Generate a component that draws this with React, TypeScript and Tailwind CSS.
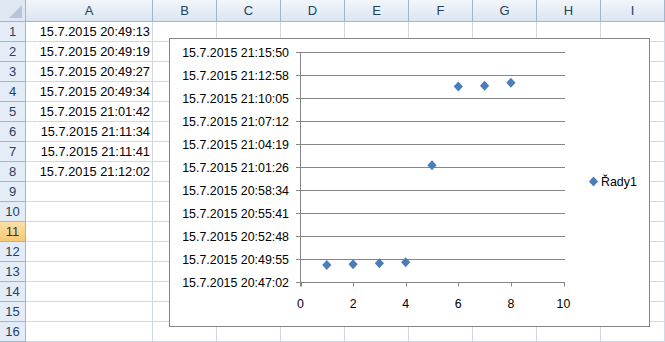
import React from "react";

const cols = ["A", "B", "C", "D", "E", "F", "G", "H", "I"];
const aValues = [
  "15.7.2015 20:49:13",
  "15.7.2015 20:49:19",
  "15.7.2015 20:49:27",
  "15.7.2015 20:49:34",
  "15.7.2015 21:01:42",
  "15.7.2015 21:11:34",
  "15.7.2015 21:11:41",
  "15.7.2015 21:12:02",
];
const yLabels = [
  "15.7.2015 21:15:50",
  "15.7.2015 21:12:58",
  "15.7.2015 21:10:05",
  "15.7.2015 21:07:12",
  "15.7.2015 21:04:19",
  "15.7.2015 21:01:26",
  "15.7.2015 20:58:34",
  "15.7.2015 20:55:41",
  "15.7.2015 20:52:48",
  "15.7.2015 20:49:55",
  "15.7.2015 20:47:02",
];
const secs = [131, 137, 145, 152, 880, 1472, 1479, 1500];

function Diamond({ cx, cy }: { cx: number; cy: number }) {
  return (
    <polygon
      points={`${cx},${cy - 5} ${cx + 4.6},${cy} ${cx},${cy + 5} ${cx - 4.6},${cy}`}
      fill="#4a7ebb"
    />
  );
}

function Chart() {
  const font = "'Liberation Sans', Arial, sans-serif";
  const x0 = 130.5;
  const unit = 26.3;
  const yBase = 243.5;
  const fs = 12.4;
  return (
    <div className="absolute left-[169px] top-[38px] w-[481px] h-[289px] border border-[#868686] bg-white">
      <svg width="479" height="287" className="block">
        {yLabels.map((_, i) => (
          <line key={"g" + i} x1={126} x2={395} y1={13.5 + 23 * i} y2={13.5 + 23 * i} stroke="#868686" strokeWidth={1} />
        ))}
        <line x1={x0} x2={x0} y1={13} y2={247.5} stroke="#868686" strokeWidth={1} />
        {[0, 2, 4, 6, 8, 10].map((v) => (
          <line key={"t" + v} x1={Math.round(x0 + unit * v) + 0.5} x2={Math.round(x0 + unit * v) + 0.5} y1={yBase} y2={yBase + 4} stroke="#868686" strokeWidth={1} />
        ))}
        {yLabels.map((l, i) => (
          <text key={"y" + i} x={119} y={13.5 + 23 * i} textAnchor="end" dominantBaseline="central" fontFamily={font} fontSize={fs} fill="#000">
            {l}
          </text>
        ))}
        {[0, 2, 4, 6, 8, 10].map((v) => (
          <text key={"x" + v} x={x0 + unit * v} y={265} textAnchor="middle" dominantBaseline="central" fontFamily={font} fontSize={fs} fill="#000">
            {v}
          </text>
        ))}
        {secs.map((s, i) => (
          <Diamond key={"p" + i} cx={x0 + unit * (i + 1)} cy={282 - (s / 1728) * 230 - 39 + 0.5} />
        ))}
        <Diamond cx={423.5} cy={142.5} />
        <text x={431} y={142.5} dominantBaseline="central" fontFamily={font} fontSize={fs} fill="#000">
          Řady1
        </text>
      </svg>
    </div>
  );
}

export default function App() {
  return (
    <div className="relative w-[665px] h-[342px] overflow-hidden bg-white font-['Liberation_Sans',Arial,sans-serif]">
      <div className="grid grid-cols-[26px_127px_repeat(7,64px)_64px] grid-rows-[22px_repeat(16,20px)]">
        <div className="relative border-r border-b border-[#9eb6ce] bg-[#dfe7f2]">
          <div className="absolute right-[3px] bottom-[3px] w-0 h-0 border-l-[13px] border-l-transparent border-b-[13px] border-b-[#b5c6db]" />
        </div>
        {cols.map((c) => (
          <div
            key={c}
            className="flex items-center justify-center border-r border-b border-[#9eb6ce] bg-gradient-to-b from-[#f2f6fb] to-[#dbe5f1] text-[13px] text-[#27415f]"
          >
            {c}
          </div>
        ))}
        {Array.from({ length: 16 }).map((_, r) => (
          <React.Fragment key={r}>
            <div
              className={
                r === 10
                  ? "flex items-center justify-center border-r border-b border-[#9eb6ce] bg-gradient-to-b from-[#fbe0a8] to-[#f6c874] text-[13px] text-[#3b3320]"
                  : "flex items-center justify-center border-r border-b border-[#9eb6ce] bg-[#e4ecf7] text-[13px] text-[#27415f]"
              }
            >
              {r + 1}
            </div>
            {cols.map((c) => (
              <div
                key={c}
                className="flex items-center justify-end pr-[2px] border-r border-b border-[#d0d7e5] text-[12.8px] text-black whitespace-nowrap"
              >
                {c === "A" && r < 8 ? aValues[r] : ""}
              </div>
            ))}
          </React.Fragment>
        ))}
      </div>
      <Chart />
    </div>
  );
}
